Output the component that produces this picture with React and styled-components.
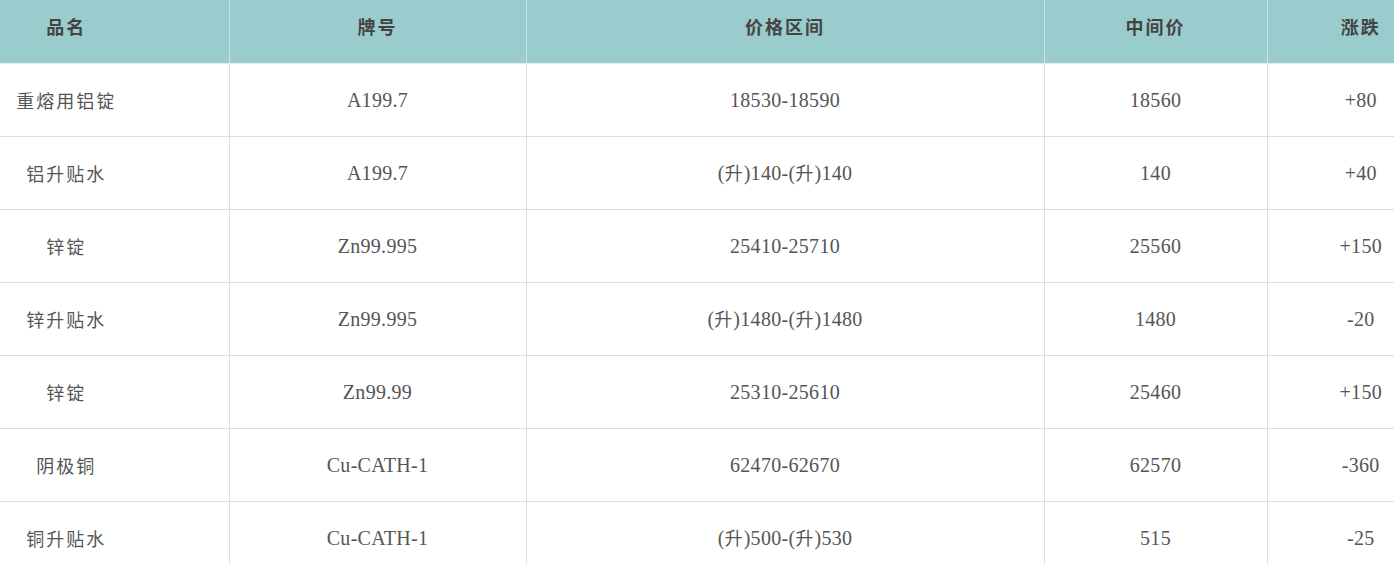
import React from 'react';
import styled, { createGlobalStyle } from 'styled-components';

const GlobalStyle = createGlobalStyle`
    html, body {
        margin: 0;
        padding: 0;
        overflow: hidden;
        background: #ffffff;
    }
`;

const Table = styled.table`
    width: 1454px;
    border-collapse: collapse;
    table-layout: fixed;
    font-family: "Liberation Serif", "Noto Sans CJK SC", serif;
    font-size: 20px;
    color: #555555;
`;

const HeadCell = styled.th`
    height: 63px;
    padding: 0 ${(p) => (p.$first ? '96px' : '0')} 10px 0;
    background-color: #9bcccd;
    color: #444444;
    font-family: "Noto Sans CJK SC", sans-serif;
    font-size: 18px;
    line-height: 20px;
    letter-spacing: 2px;
    font-weight: bold;
    text-align: center;
    border-left: 1px solid #c9e4e4;
    border-bottom: 1px solid #e4f1f1;
    box-sizing: border-box;

    &:first-child {
        border-left: none;
    }
`;

const Cell = styled.td`
    height: 73px;
    padding: 0 ${(p) => (p.$first ? '96px' : '0')} 0 0;
    text-align: center;
    white-space: nowrap;
    line-height: 20px;
    border-left: 1px solid #dddddd;
    border-bottom: 1px solid #dddddd;
    box-sizing: border-box;
    font-family: ${(p) => (p.$first ? '"Noto Sans CJK SC", sans-serif' : '"Liberation Serif", "Noto Sans CJK SC", serif')};
    font-size: ${(p) => (p.$first ? '18px' : '20px')};
    letter-spacing: ${(p) => (p.$first ? '2px' : '0.3px')};

    &:first-child {
        border-left: none;
    }
`;

const Rise = styled.span`
    font-family: "Noto Sans CJK SC", sans-serif;
    font-size: 18px;
    letter-spacing: 1px;
`;

const columns = [
    { title: '品名', width: 229 },
    { title: '牌号', width: 297 },
    { title: '价格区间', width: 518 },
    { title: '中间价', width: 223 },
    { title: '涨跌', width: 187 },
];

const rows = [
    ['重熔用铝锭', 'A199.7', '18530-18590', '18560', '+80'],
    ['铝升贴水', 'A199.7', '(升)140-(升)140', '140', '+40'],
    ['锌锭', 'Zn99.995', '25410-25710', '25560', '+150'],
    ['锌升贴水', 'Zn99.995', '(升)1480-(升)1480', '1480', '-20'],
    ['锌锭', 'Zn99.99', '25310-25610', '25460', '+150'],
    ['阴极铜', 'Cu-CATH-1', '62470-62670', '62570', '-360'],
    ['铜升贴水', 'Cu-CATH-1', '(升)500-(升)530', '515', '-25'],
];

// "(升)" 用中文字体渲染
function renderValue(v) {
    if (!v.includes('升')) return v;
    return v.split('升').map((part, i, arr) => (
        <React.Fragment key={i}>
            {part}
            {i < arr.length - 1 && <Rise>升</Rise>}
        </React.Fragment>
    ));
}

export default function App() {
    return (
        <>
            <GlobalStyle />
            <Table>
                <colgroup>
                    {columns.map((c) => (
                        <col key={c.title} style={{ width: c.width }} />
                    ))}
                </colgroup>
                <thead>
                    <tr>
                        {columns.map((c, i) => (
                            <HeadCell key={c.title} $first={i === 0}>{c.title}</HeadCell>
                        ))}
                    </tr>
                </thead>
                <tbody>
                    {rows.map((r, ri) => (
                        <tr key={ri}>
                            {r.map((v, i) => (
                                <Cell key={i} $first={i === 0}>{i === 0 ? v : renderValue(v)}</Cell>
                            ))}
                        </tr>
                    ))}
                </tbody>
            </Table>
        </>
    );
}
